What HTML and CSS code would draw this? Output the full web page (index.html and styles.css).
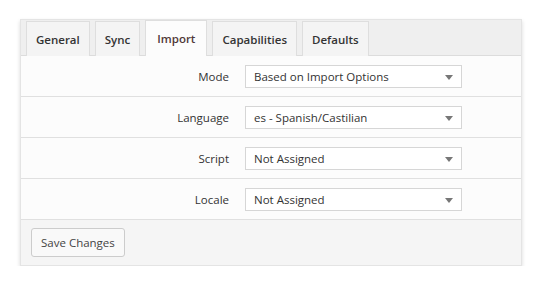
FILE: index.html
```html
<!DOCTYPE html>
<html>
<head>
<meta charset="utf-8">
<link rel="stylesheet" href="styles.css">
</head>
<body>
<div class="card">
  <div class="tabs">
    <div class="tab">General</div>
    <div class="tab">Sync</div>
    <div class="tab active">Import</div>
    <div class="tab">Capabilities</div>
    <div class="tab">Defaults</div>
  </div>
  <div class="rows">
    <div class="row"><div class="label">Mode</div><div class="select">Based on Import Options<span class="caret"></span></div></div>
    <div class="row"><div class="label">Language</div><div class="select">es - Spanish/Castilian<span class="caret"></span></div></div>
    <div class="row"><div class="label">Script</div><div class="select">Not Assigned<span class="caret"></span></div></div>
    <div class="row"><div class="label">Locale</div><div class="select">Not Assigned<span class="caret"></span></div></div>
  </div>
  <div class="footer"><button class="btn">Save Changes</button></div>
</div>
</body>
</html>
```
FILE: styles.css
```css
html, body { margin: 0; padding: 0; background: #fff; }
body { font-family: "Open Sans", "Noto Sans", sans-serif; font-size: 11.5px; color: #333; padding: 19px 20px 0 20px; }
.card { width: 500px; background: #fcfcfc; border: 1px solid #e4e4e4; box-shadow: 0 2px 4px rgba(0,0,0,0.15); }
.tabs { display: flex; gap: 5px; padding: 0 0 0 5px; background: #efefef; border-bottom: 1px solid #dcdcdc; height: 35px; align-items: flex-end; }
.tab { box-sizing: border-box; padding: 0 9px; display: flex; align-items: center; background: #f4f4f4; border: 1px solid #dedede; border-bottom: none; font-weight: 600; color: #333; margin-bottom: -1px; height: 35px; }
.tab.active { background: #fcfcfc; color: #503838; height: 36px; padding: 0 11px; }
.row { display: flex; align-items: center; height: 40px; border-bottom: 1px solid #e0e0e0; }
.label { width: 208px; text-align: right; padding-right: 16px; color: #333; }
.select { position: relative; width: 217px; height: 23px; box-sizing: border-box; border: 1px solid #d6d6d6; background: #fff; padding-left: 8px; display: flex; align-items: center; color: #333; }
.caret { position: absolute; right: 8px; top: 9px; width: 0; height: 0; border-left: 4px solid transparent; border-right: 4px solid transparent; border-top: 5px solid #777; }
.footer { background: #f5f5f5; padding: 8px 10px 8px 10px; }
.btn { font-family: inherit; font-size: 11.5px; color: #444; background: #f9f9f9; border: 1px solid #ccc; border-radius: 3px; height: 29px; padding: 0 9px; }
```
